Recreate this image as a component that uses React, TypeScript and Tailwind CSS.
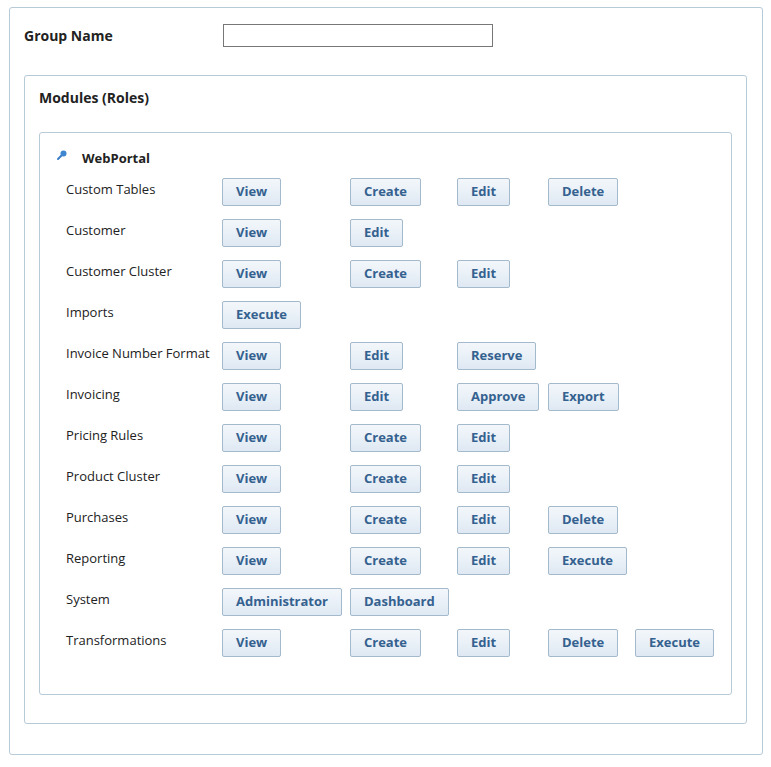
const rows: [string, (string | null)[]][] = [
  ["Custom Tables", ["View", "Create", "Edit", "Delete"]],
  ["Customer", ["View", "Edit"]],
  ["Customer Cluster", ["View", "Create", "Edit"]],
  ["Imports", ["Execute"]],
  ["Invoice Number Format", ["View", "Edit", "Reserve"]],
  ["Invoicing", ["View", "Edit", "Approve", "Export"]],
  ["Pricing Rules", ["View", "Create", "Edit"]],
  ["Product Cluster", ["View", "Create", "Edit"]],
  ["Purchases", ["View", "Create", "Edit", "Delete"]],
  ["Reporting", ["View", "Create", "Edit", "Execute"]],
  ["System", ["Administrator", "Dashboard"]],
  ["Transformations", ["View", "Create", "Edit", "Delete", "Execute"]],
];
const colW = ["w-[128px]", "w-[107px]", "w-[91px]", "w-[87px]", "w-[87px]"];

function Btn({ t }: { t: string }) {
  return (
    <button className="h-[28px] px-[13px] border border-[#a3b9cc] rounded-[2px] bg-gradient-to-b from-[#f3f7fb] to-[#dfe9f3] text-[#34618f] font-bold text-[13px]">
      {t}
    </button>
  );
}

export default function App() {
  return (
    <div className="w-[771px] h-[767px] bg-white pt-[7px] pl-[9px]" style={{ fontFamily: '"Open Sans", "DejaVu Sans", sans-serif' }}>
      <div className="w-[754px] h-[748px] border border-[#b7cad8] rounded-[3px] px-[14px]">
        <div className="flex items-center h-[54px] pt-[1px]">
          <div className="w-[199px] font-bold text-[14px] text-[#222]">Group Name</div>
          <input className="w-[270px] h-[23px] border border-[#777] outline-none" />
        </div>
        <div className="mt-[13px] w-[723px] h-[649px] border border-[#b7cad8] rounded-[3px] px-[14px]">
          <div className="h-[56px] pt-[11px] font-bold text-[14px] text-[#222]">Modules (Roles)</div>
          <div className="w-[693px] h-[563px] border border-[#b7cad8] rounded-[3px] pl-[16px]">
            <div className="flex items-center pt-[14px] h-[38px]">
              <svg width="12" height="12" viewBox="0 0 12 12" className="mt-[-8px]">
                <path d="M2 10 L6 6" stroke="#3a7cc4" strokeWidth="2" strokeLinecap="round" />
                <circle cx="7.5" cy="4.5" r="3" fill="#3f86d0" />
              </svg>
              <span className="ml-[14px] font-bold text-[13px] text-[#222]">WebPortal</span>
            </div>
            <div className="pl-[10px] flex flex-col gap-[13px] mt-[7px]">
              {rows.map(([label, btns]) => (
                <div key={label} className="flex items-center h-[28px]">
                  <div className="w-[156px] text-[13px] text-[#222] mt-[-4px] whitespace-nowrap">{label}</div>
                  {btns.map((b, i) => (
                    <div key={i} className={colW[i]}>{b && <Btn t={b} />}</div>
                  ))}
                </div>
              ))}
            </div>
          </div>
        </div>
      </div>
    </div>
  );
}
